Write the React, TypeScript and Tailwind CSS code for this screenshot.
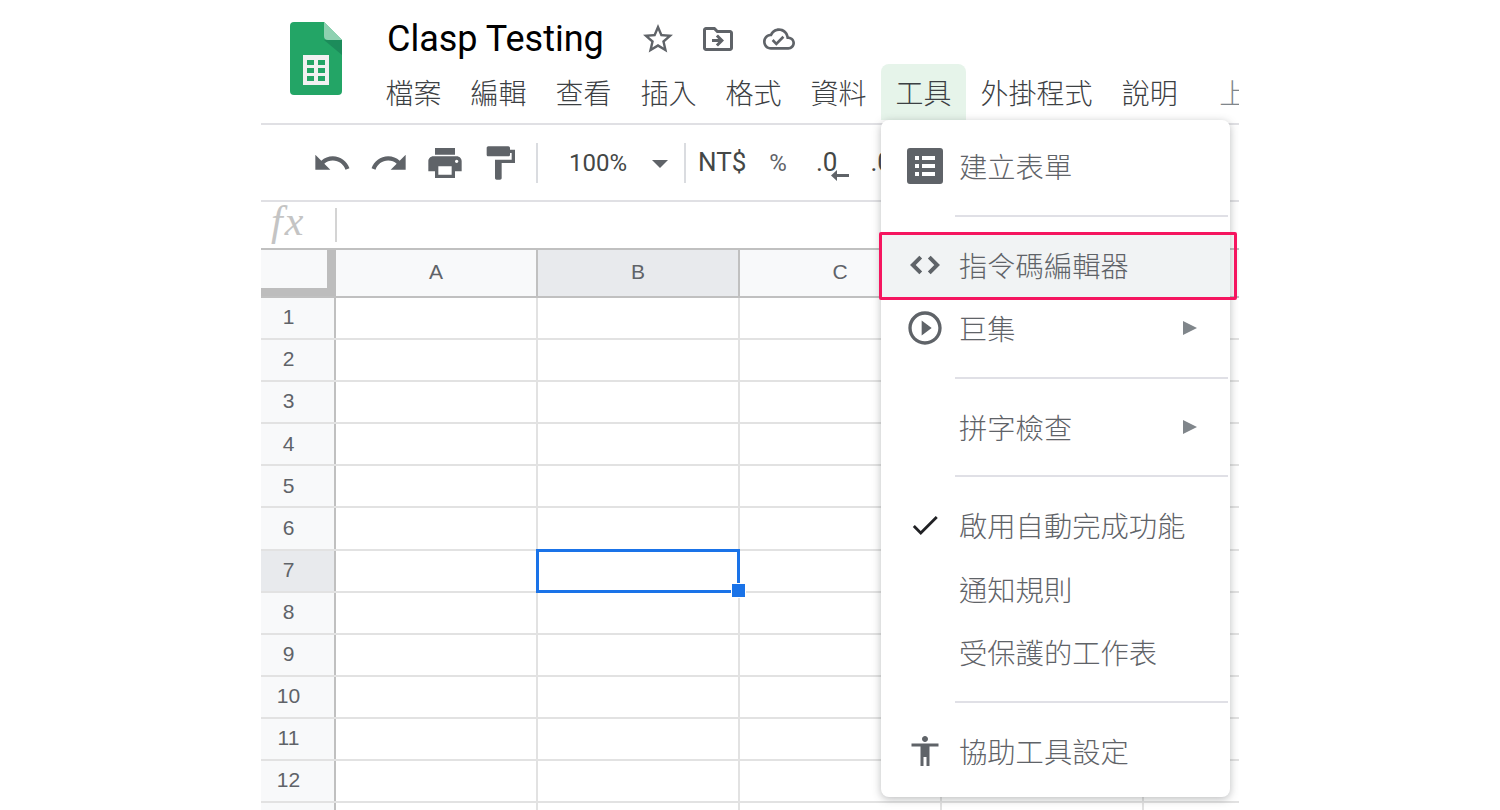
const CJK = "font-['Noto_Sans_CJK_TC',sans-serif]";

function Mi({ d, size = 40, className = "" }: { d: string; size?: number; className?: string }) {
  return (
    <svg width={size} height={size} viewBox="0 0 24 24" fill="currentColor" className={className}>
      <path d={d} />
    </svg>
  );
}

const icons = {
  star: "M22 9.24l-7.19-.62L12 2 9.19 8.63 2 9.24l5.46 4.73L5.82 21 12 17.27 18.18 21l-1.63-7.03L22 9.24zM12 15.4l-3.76 2.27 1-4.28-3.32-2.88 4.38-.38L12 6.1l1.71 4.04 4.38.38-3.32 2.88 1 4.28L12 15.4z",
  move: "M20 6h-8l-2-2H4c-1.1 0-2 .9-2 2v12c0 1.1.9 2 2 2h16c1.1 0 2-.9 2-2V8c0-1.1-.9-2-2-2zm0 12H4V6h5.17l2 2H20v10zm-8.01-9l-1.41 1.41L12.16 12H8v2h4.16l-1.59 1.59L11.99 17 16 13.01 11.99 9z",
  cloud: "M19.35 10.04C18.67 6.59 15.64 4 12 4 9.11 4 6.6 5.64 5.35 8.04 2.34 8.36 0 10.91 0 14c0 3.31 2.69 6 6 6h13c2.76 0 5-2.24 5-5 0-2.64-2.05-4.78-4.65-4.96zM19 18H6c-2.21 0-4-1.79-4-4 0-2.05 1.53-3.76 3.56-3.97l1.07-.11.5-.95C8.08 7.14 9.94 6 12 6c2.62 0 4.88 1.86 5.39 4.43l.3 1.5 1.53.11c1.56.1 2.78 1.41 2.78 2.96 0 1.65-1.35 3-3 3zm-9-3.82l-2.09-2.09L6.5 13.5 10 17l6.01-6.01-1.41-1.41z",
  undo: "M12.5 8c-2.65 0-5.05.99-6.9 2.6L2 7v9h9l-3.62-3.62c1.39-1.16 3.16-1.88 5.12-1.88 3.54 0 6.55 2.31 7.6 5.5l2.37-.78C21.08 11.03 17.15 8 12.5 8z",
  redo: "M18.4 10.6C16.55 8.99 14.15 8 11.5 8c-4.65 0-8.58 3.03-9.96 7.22L3.9 16c1.05-3.19 4.05-5.5 7.6-5.5 1.95 0 3.73.72 5.12 1.88L13 16h9V7l-3.6 3.6z",
  print: "M19 8H5c-1.66 0-3 1.34-3 3v6h4v4h12v-4h4v-6c0-1.66-1.34-3-3-3zm-3 11H8v-5h8v5zm3-7c-.55 0-1-.45-1-1s.45-1 1-1 1 .45 1 1-.45 1-1 1zm-1-9H6v4h12V3z",
  paint: "M18 4V3c0-.55-.45-1-1-1H5c-.55 0-1 .45-1 1v4c0 .55.45 1 1 1h12c.55 0 1-.45 1-1V6h1v4H9v11c0 .55.45 1 1 1h2c.55 0 1-.45 1-1v-9h8V4h-3z",
  code: "M9.4 16.6L4.8 12l4.6-4.6L8 6l-6 6 6 6 1.4-1.4zm5.2 0l4.6-4.6-4.6-4.6L16 6l6 6-6 6-1.4-1.4z",
  play: "M10 16.5l6-4.5-6-4.5v9zM12 2C6.48 2 2 6.48 2 12s4.48 10 10 10 10-4.48 10-10S17.52 2 12 2zm0 18c-4.41 0-8-3.59-8-8s3.59-8 8-8 8 3.59 8 8-3.59 8-8 8z",
  check: "M9 16.17L4.83 12l-1.42 1.41L9 19 21 7l-1.41-1.41z",
  person: "M12 2c1.1 0 2 .9 2 2s-.9 2-2 2-2-.9-2-2 .9-2 2-2zm9 7h-6v13h-2v-6h-2v6H9V9H3V7h18v2z",
};

function SheetsLogo() {
  return (
    <svg width="52" height="73" viewBox="0 0 52 73" className="shrink-0">
      <path d="M4 0H34L52 18V69a4 4 0 0 1-4 4H4a4 4 0 0 1-4-4V4a4 4 0 0 1 4-4z" fill="#23a566" />
      <path d="M34 18L52 33V18z" fill="#1c8c5b" />
      <path d="M34 0L52 18H38a4 4 0 0 1-4-4z" fill="#8ed1b1" />
      <path d="M13 33H39V63H13zM17 38V43H24V38zM28 38V43H35V38zM17 46V51H24V46zM28 46V51H35V46zM17 54V59H24V54zM28 54V59H35V54z" fill="#f1f1f1" fillRule="evenodd" />
    </svg>
  );
}

function FormIcon() {
  return (
    <svg width="36" height="36" viewBox="0 0 36 36">
      <path
        fillRule="evenodd"
        d="M3 0H33a3 3 0 0 1 3 3V33a3 3 0 0 1-3 3H3a3 3 0 0 1-3-3V3a3 3 0 0 1 3-3zM8 8V12H12V8zM15 8V12H28V8zM8 16V20H12V16zM15 16V20H28V16zM8 24V28H12V24zM15 24V28H28V24z"
        fill="#5f6368"
      />
    </svg>
  );
}

function Divider() {
  return <div className="w-[2px] h-[40px] bg-[#dadce0] shrink-0" />;
}

function Toolbar() {
  return (
    <div className="h-[77px] border-b-2 border-[#e0e0e4] flex items-center text-[#5f6368] pl-[51px] overflow-hidden">
      <Mi d={icons.undo} />
      <Mi d={icons.redo} className="ml-[17px]" />
      <Mi d={icons.print} className="ml-[16px]" />
      <Mi d={icons.paint} className="ml-[15px]" />
      <div className="ml-[16px]">
        <Divider />
      </div>
      <span className="ml-[31px] text-[24px] font-['Roboto',sans-serif] text-[#444746]">100%</span>
      <div className="ml-[25px] mt-[2px] w-0 h-0 border-x-[8px] border-x-transparent border-t-[8px] border-t-[#5f6368]" />
      <div className="ml-[16px]">
        <Divider />
      </div>
      <span className="ml-[12px] text-[26px] font-['Roboto',sans-serif] text-[#444746]">NT$</span>
      <span className="ml-[23px] text-[24px] font-['Roboto',sans-serif]">%</span>
      <div className="ml-[29px] relative">
        <span className="text-[26px] font-['Roboto',sans-serif] text-[#444746]">.0</span>
        <svg width="18" height="11" viewBox="0 0 18 11" className="absolute left-[15px] top-[27px]">
          <path d="M0 5.5L6 0V4H18V7H6V11z" fill="#5f6368" />
        </svg>
      </div>
      <span className="ml-[33px] text-[26px] font-['Roboto',sans-serif] text-[#444746]">.0</span>
      <div className="ml-[320px]">
        <Divider />
      </div>
    </div>
  );
}

const colHeads = [
  { label: "A", w: "w-[202px]", bg: "bg-[#f8f9fa]" },
  { label: "B", w: "w-[202px]", bg: "bg-[#e8eaed]" },
  { label: "C", w: "w-[202px]", bg: "bg-[#f8f9fa]" },
  { label: "", w: "w-[202px]", bg: "bg-[#f8f9fa]" },
];
const rows = [1, 2, 3, 4, 5, 6, 7, 8, 9, 10, 11, 12, 0];

function Grid() {
  return (
    <div className="relative font-['Liberation_Sans',sans-serif]">
      <div className="flex h-[50px] border-y-2 border-[#c0c0c0]">
        <div className="w-[75px] shrink-0 bg-[#f8f9fa] border-r-[9px] border-b-[8px] border-[#bdbdbd]" />
        {colHeads.map((c, i) => (
          <div
            key={i}
            className={`${c.w} ${c.bg} shrink-0 border-r-2 border-[#c0c0c0] flex items-center justify-center pb-[2px] text-[21px] text-[#5f6368]`}>
            {c.label}
          </div>
        ))}
        <div className="flex-1 bg-[#f8f9fa]" />
      </div>
      {rows.map((r, i) => (
        <div key={i} className="flex h-[42.1px] border-b-2 border-[#e2e2e2]">
          <div
            className={`w-[75px] shrink-0 border-r-2 border-[#c0c0c0] pr-[18px] pb-[2px] flex items-center justify-center text-[21px] text-[#5f6368] ${
              r === 7 ? "bg-[#e8eaed]" : "bg-[#f8f9fa]"
            }`}>
            {r > 0 ? r : ""}
          </div>
          {colHeads.map((c, j) => (
            <div key={j} className={`${c.w} shrink-0 border-r-2 border-[#e2e2e2]`} />
          ))}
        </div>
      ))}
      {/* selected cell */}
      <div className="absolute left-[275px] top-[301px] w-[204px] h-[44px] border-[3px] border-[#1a73e8]" />
      <div className="absolute left-[470px] top-[335px] w-[15px] h-[15px] bg-[#1a73e8] border border-white" />
    </div>
  );
}

function MenuRow({ icon, label, arrow }: { icon?: React.ReactNode; label: string; arrow?: boolean }) {
  return (
    <div className="h-[63.5px] flex items-center">
      <div className="w-[78px] shrink-0 flex justify-center text-[#5f6368] pl-[10px]">{icon}</div>
      <span className={`text-[28.3px] font-light text-[#5f6368] ${CJK}`}>{label}</span>
      {arrow && (
        <div className="ml-auto mr-[33px] w-0 h-0 border-y-[7px] border-y-transparent border-l-[14px] border-l-[#80868b]" />
      )}
    </div>
  );
}

function MenuSep() {
  return (
    <div className="h-[35px] flex items-center pl-[74px] pr-[2px]">
      <div className="h-[2px] w-full bg-[#e0e0e6]" />
    </div>
  );
}

function ToolsMenu() {
  return (
    <div className="absolute left-[620px] top-[120px] w-[349px] h-[677px] bg-white rounded-[8px] shadow-[0_2px_8px_rgba(60,64,67,0.35)] pt-[14.5px]">
      <MenuRow icon={<FormIcon />} label="建立表單" />
      <MenuSep />
      <div className="bg-[#f1f3f4]">
        <MenuRow icon={<Mi d={icons.code} size={34} className="stroke-current stroke-[0.8]" />} label="指令碼編輯器" />
      </div>
      <MenuRow icon={<Mi d={icons.play} size={40} />} label="巨集" arrow />
      <MenuSep />
      <MenuRow label="拼字檢查" arrow />
      <MenuSep />
      <MenuRow icon={<Mi d={icons.check} size={34} className="text-[#202124]" />} label="啟用自動完成功能" />
      <MenuRow label="通知規則" />
      <MenuRow label="受保護的工作表" />
      <MenuSep />
      <MenuRow icon={<Mi d={icons.person} size={36} />} label="協助工具設定" />
      {/* annotation box */}
      <div className="absolute left-[-2px] top-[112px] w-[358px] h-[68px] border-[3px] border-[#f5155f] rounded-[2px]" />
    </div>
  );
}

const menus = ["檔案", "編輯", "查看", "插入", "格式", "資料", "工具", "外掛程式", "說明"];

export default function App() {
  return (
    <div className="bg-white min-h-screen">
      <div className="relative w-[978px] h-[810px] mx-auto overflow-hidden">
        <header className="h-[123px] flex pl-[29px]">
          <div className="pt-[22px]">
            <SheetsLogo />
          </div>
          <div className="ml-[29px] flex-1 min-w-0">
            <div className="h-[64px] flex items-center pt-[14px]">
              <span className="ml-[16px] text-[36px] leading-none text-black font-['Roboto',sans-serif]">Clasp Testing</span>
              <div className="ml-[36px] flex items-center text-[#5f6368]">
                <Mi d={icons.star} size={36} />
                <Mi d={icons.move} size={36} className="ml-[24px]" />
                <Mi d={icons.cloud} size={32} className="ml-[27px]" />
              </div>
            </div>
            <nav className={`flex h-[56px] text-[28px] font-light text-[#3c4043] ${CJK} whitespace-nowrap`}>
              {menus.map(m => (
                <div
                  key={m}
                  className={`px-[14.5px] flex items-center rounded-t-[8px] ${m === "工具" ? "bg-[#e6f4ea]" : ""}`}>
                  {m}
                </div>
              ))}
              <div className="ml-[27px] flex items-center text-[#80868b]">上次編輯</div>
            </nav>
          </div>
        </header>
        <div className="h-[2px] bg-[#e0e0e4]" />
        <Toolbar />
        <div className="h-[46px] flex items-center">
          <span className="ml-[10px] w-[64px] text-[42px] italic leading-none tracking-[2px] text-[#c4c4c4] font-['Liberation_Serif',serif] pb-[8px]">fx</span>
          <div className="w-[2px] h-[34px] bg-[#d4d4d4]" />
        </div>
        <Grid />
        <ToolsMenu />
      </div>
    </div>
  );
}
